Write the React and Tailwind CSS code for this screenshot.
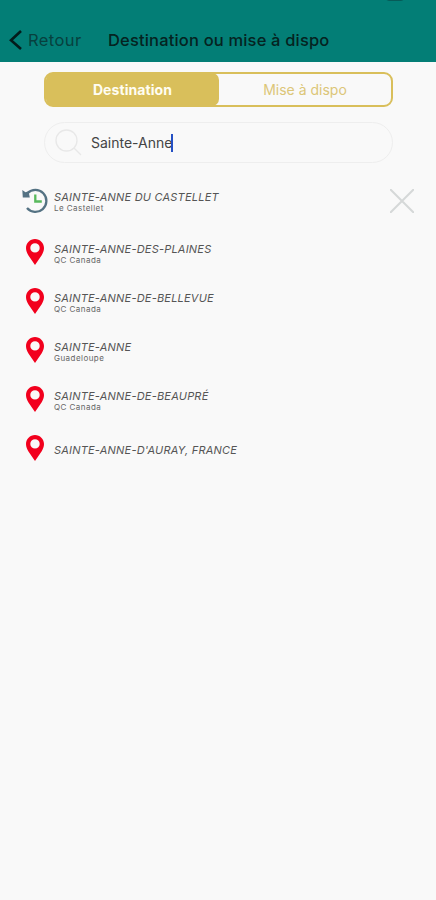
import React, { useState } from "react";

const results = [
  { id: 1, title: "SAINTE-ANNE DU CASTELLET", place: "Le Castellet", recent: true },
  { id: 2, title: "SAINTE-ANNE-DES-PLAINES", place: "QC Canada" },
  { id: 3, title: "SAINTE-ANNE-DE-BELLEVUE", place: "QC Canada" },
  { id: 4, title: "SAINTE-ANNE", place: "Guadeloupe" },
  { id: 5, title: "SAINTE-ANNE-DE-BEAUPRÉ", place: "QC Canada" },
  { id: 6, title: "SAINTE-ANNE-D'AURAY, FRANCE" },
];

const PinIcon = () => (
  <svg width="18" height="26" viewBox="0 0 18 26">
    <path
      fill="#f2001d"
      fillRule="evenodd"
      d="M9 0C4 0 0 4 0 9c0 2.700 1 4.800 2.300 7.200L9 26l6.700-9.800C17 13.800 18 11.700 18 9c0-5-4-9-9-9Zm0 4.200a4.700 4.700 0 1 1 0 9.400 4.700 4.700 0 0 1 0-9.400Z"
    />
  </svg>
);

const HistoryIcon = () => (
  <svg width="26" height="26" viewBox="0 0 26 26" fill="none">
    <path d="M5.500 5.200A11 11 0 1 1 5 20" stroke="#547283" strokeWidth="2.300" />
    <path d="M0.300 2 3.500 4.200 6.500 3.300 7.800 9.500 0.800 9.500Z" fill="#547283" />
    <path d="M13.300 6.500v7h6.500" stroke="#58b95c" strokeWidth="2.300" />
  </svg>
);

const ResultRow = ({ item }) => (
  <li className={item.recent ? "flex h-[52px] items-center px-[22px]" : "flex h-[49px] items-center px-[22px]"}>
    <div className={item.recent ? "-mt-px flex w-[26px] shrink-0 justify-center" : "flex w-[26px] shrink-0 justify-center"}>
      {item.recent ? <HistoryIcon /> : <PinIcon />}
    </div>
    <div className={item.recent ? "ml-1.5 flex-1 pt-0.5" : "ml-1.5 flex-1 pt-[5px]"}>
      <p className="text-[11px] leading-[12px] tracking-[0.21px] whitespace-nowrap text-[#555] italic">{item.title}</p>
      {item.place && (
        <p className="text-[8px] leading-[10px] tracking-[0.45px] text-[#666]">{item.place}</p>
      )}
    </div>
    {item.recent && (
      <button aria-label="Supprimer" className="-mt-px">
        <svg width="24" height="24" viewBox="0 0 24 24" stroke="#d5d8d8" strokeWidth="2">
          <path d="M0 0 24 24M24 0 0 24" />
        </svg>
      </button>
    )}
  </li>
);

const App = () => {
  const [tab, setTab] = useState("destination");

  return (
    <div className="flex h-[900px] w-[436px] flex-col overflow-hidden bg-[#f9f9f9] font-['Inter',sans-serif]">
      <header className="relative flex h-[62px] shrink-0 items-start bg-[#037e76] pt-[29px]">
        <div className="absolute -top-2 left-[385px] h-[9px] w-5 rounded-full bg-[#075b58]" />
        <button className="flex h-[22px] w-[108px] items-center pl-[9px]">
          <svg width="13" height="20" viewBox="0 0 13 20" fill="none" stroke="#031c1b" strokeWidth="2.600">
            <path d="M12 1 2 10.300 12 19" />
          </svg>
          <span className="ml-1.5 text-[16.500px] leading-[22px] tracking-[0.4px] text-[#07413e]">Retour</span>
        </button>
        <h1 className="text-[16.500px] leading-[22px] font-medium tracking-[0.17px] whitespace-nowrap text-[#052321]">
          Destination ou mise à dispo
        </h1>
      </header>

      {/* Tabs */}
      <div className="mr-[43px] ml-11 mt-2.5 flex h-[35px] shrink-0 rounded-[9px] border-2 border-[#d9bf5b] text-[14px]">
        <button
          onClick={() => setTab("destination")}
          className={tab === "destination" ? "-my-px w-[173px] rounded-[7px] bg-[#d9bf5b] font-bold tracking-[0.08px] text-[#fffdf2]" : "w-[173px] text-[#dcc678]"}
        >
          Destination
        </button>
        <button
          onClick={() => setTab("dispo")}
          className={tab === "dispo" ? "-my-px flex-1 rounded-[7px] bg-[#d9bf5b] font-bold text-[#fffdf2]" : "flex-1 text-[#dcc678]"}
        >
          Mise à dispo
        </button>
      </div>

      {/* Search field */}
      <div className="mr-[43px] ml-11 mt-[15px] flex h-[41px] shrink-0 items-center rounded-full border border-[#eeeeee] pl-[10px]">
        <svg width="27" height="27" viewBox="0 0 27 27" fill="none" stroke="#e8e8e8" strokeWidth="1.300">
          <circle cx="11.500" cy="11.500" r="10.500" />
          <path d="m19 19 7 7" />
        </svg>
        <span className="ml-[9px] text-[14px] text-[#444]">Sainte-Anne</span>
        <span className="-ml-px h-[18px] w-0.5 bg-[#2450c4]" />
      </div>

      <ul className="mt-3">
        {results.map((item) => (
          <ResultRow key={item.id} item={item} />
        ))}
      </ul>
    </div>
  );
};

export default App;
